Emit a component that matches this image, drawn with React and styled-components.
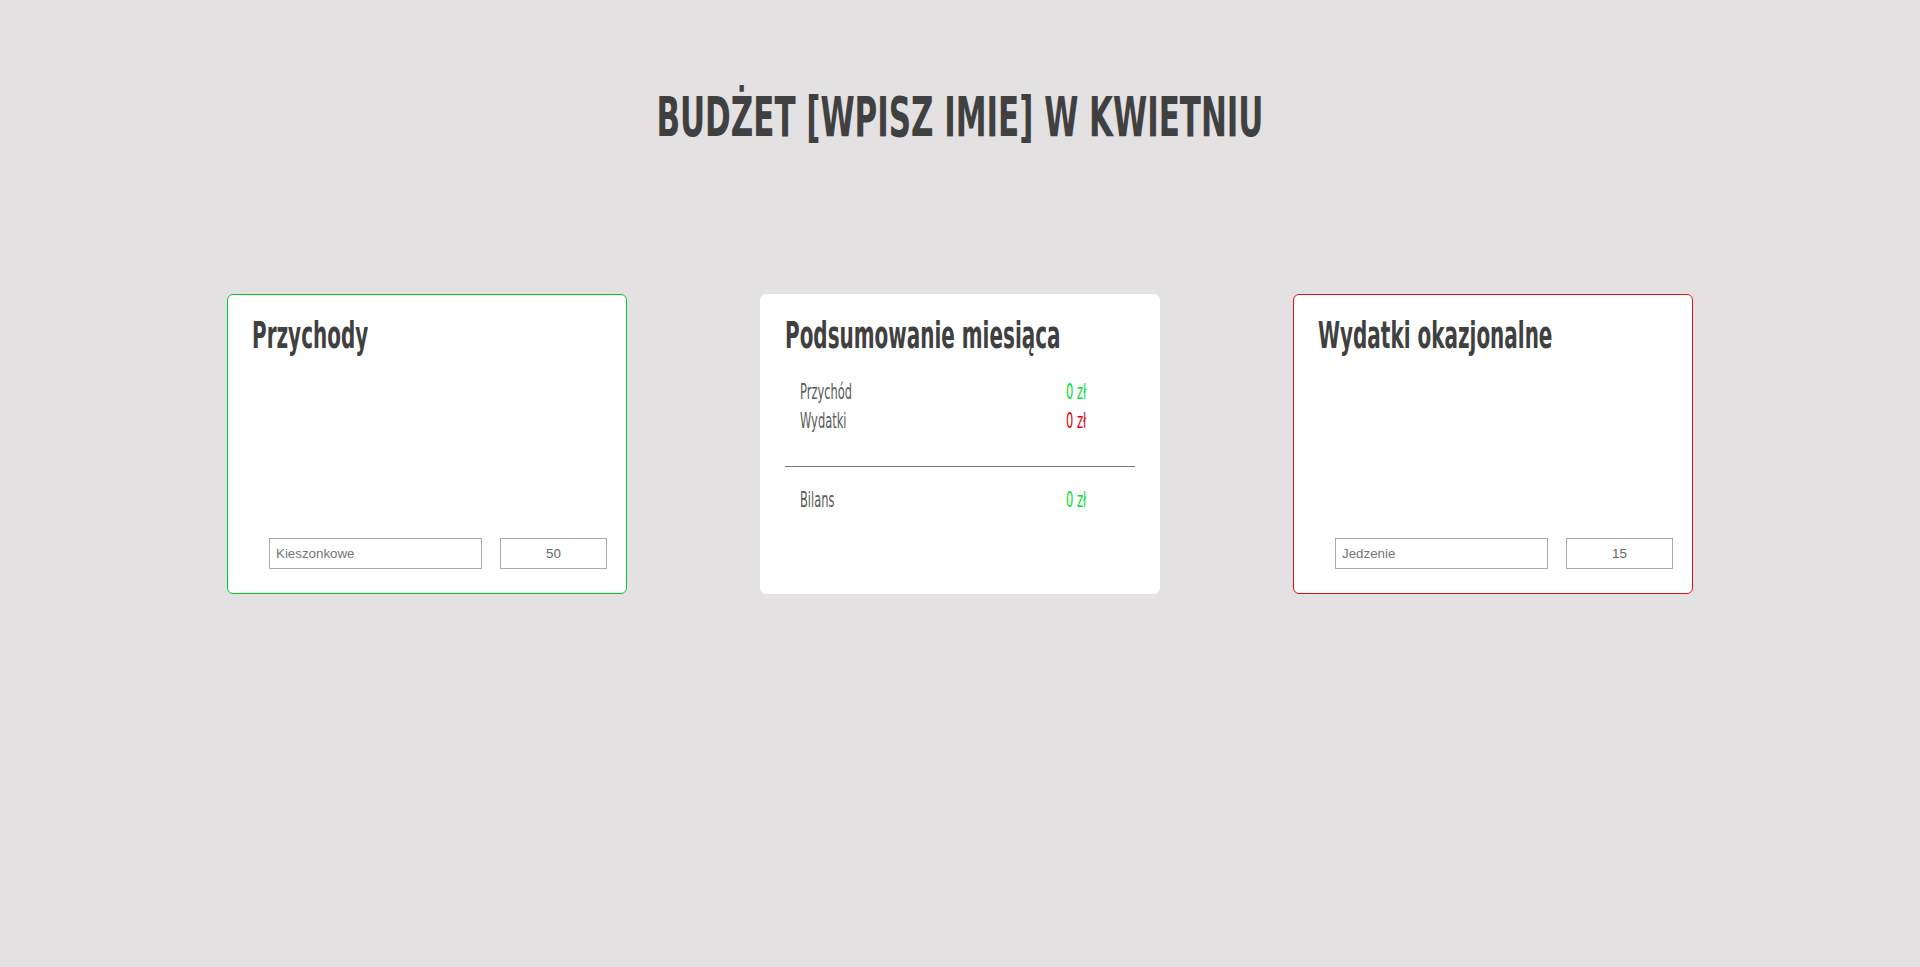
import React from "react";
import styled, { createGlobalStyle } from "styled-components";

const narrow = `"Liberation Sans Narrow", "DejaVu Sans Condensed", "Liberation Sans", sans-serif`;

const GlobalStyle = createGlobalStyle`
  * { box-sizing: border-box; }
  html, body {
    margin: 0;
    padding: 0;
    background: #e3e1e2;
    font-family: ${narrow};
  }
`;

const Page = styled.div`
  min-height: 967px;
  display: flex;
  flex-direction: column;
  align-items: center;
  padding-top: 97px;
`;

const Title = styled.h1`
  margin: 0;
  font-family: ${narrow};
  font-weight: 700;
  font-size: 40px;
  line-height: 40px;
  color: #404040;
  white-space: nowrap;
  transform: scale(0.86, 1.37);
`;

const Cards = styled.div`
  display: flex;
  justify-content: center;
  gap: 133px;
  margin-top: 157px;
`;

const Card = styled.section`
  width: 400px;
  height: 300px;
  background: #fff;
  border: 1px solid ${(p) => p.border || "#fff"};
  border-radius: 6px;
  padding: 23px 20px 24px 24px;
  display: flex;
  flex-direction: column;
`;

const Heading = styled.h2`
  margin: 0;
  font-family: ${narrow};
  font-weight: 700;
  font-size: 30px;
  line-height: 36px;
  color: #404040;
  transform: scale(0.74, 1.23);
  transform-origin: left center;
  white-space: nowrap;
`;

const Spacer = styled.div`
  flex: 1;
`;

const Form = styled.form`
  display: flex;
  gap: 18px;
  padding-left: 17px;
`;

const Input = styled.input`
  flex-shrink: 0;
  width: ${(p) => p.w}px;
  height: 31px;
  border: 1px solid #aaa;
  padding: 2px 6px;
  font-family: "Liberation Sans", Arial, sans-serif;
  font-size: 13.33px;
  color: #666;
  text-align: ${(p) => (p.center ? "center" : "left")};
  outline: none;
  &::placeholder {
    color: #757575;
  }
`;

const Summary = styled.div`
  margin-top: 23px;
  margin-right: 4px;
  display: flex;
  flex-direction: column;
`;

const Row = styled.div`
  display: grid;
  grid-template-columns: 1fr 54px;
  padding: 0 15px;
  height: 29px;
  align-items: center;
  font-family: ${narrow};
  font-size: 15px;
`;

const Label = styled.span`
  color: #5a5a5a;
  transform: scale(0.85, 1.38);
  transform-origin: left center;
`;

const Value = styled.span`
  color: ${(p) => (p.neg ? "#dd0011" : "#00dd33")};
  transform: scale(0.85, 1.38);
  transform-origin: left center;
`;

const Divider = styled.hr`
  margin: 31px 0 18px 0;
  border: none;
  border-top: 1px solid #777;
`;

export default function App() {
  return (
    <Page>
      <GlobalStyle />
      <Title>BUDŻET [WPISZ IMIE] W KWIETNIU</Title>
      <Cards>
        <Card border="#00cc22">
          <Heading>Przychody</Heading>
          <Spacer />
          <Form onSubmit={(e) => e.preventDefault()}>
            <Input w={213} placeholder="Kieszonkowe" />
            <Input w={107} center defaultValue="50" />
          </Form>
        </Card>

        <Card>
          <Heading>Podsumowanie miesiąca</Heading>
          <Summary>
            <Row>
              <Label>Przychód</Label>
              <Value>0 zł</Value>
            </Row>
            <Row>
              <Label>Wydatki</Label>
              <Value neg>0 zł</Value>
            </Row>
            <Divider />
            <Row>
              <Label>Bilans</Label>
              <Value>0 zł</Value>
            </Row>
          </Summary>
        </Card>

        <Card border="#dd1111">
          <Heading>Wydatki okazjonalne</Heading>
          <Spacer />
          <Form onSubmit={(e) => e.preventDefault()}>
            <Input w={213} placeholder="Jedzenie" />
            <Input w={107} center defaultValue="15" />
          </Form>
        </Card>
      </Cards>
    </Page>
  );
}
